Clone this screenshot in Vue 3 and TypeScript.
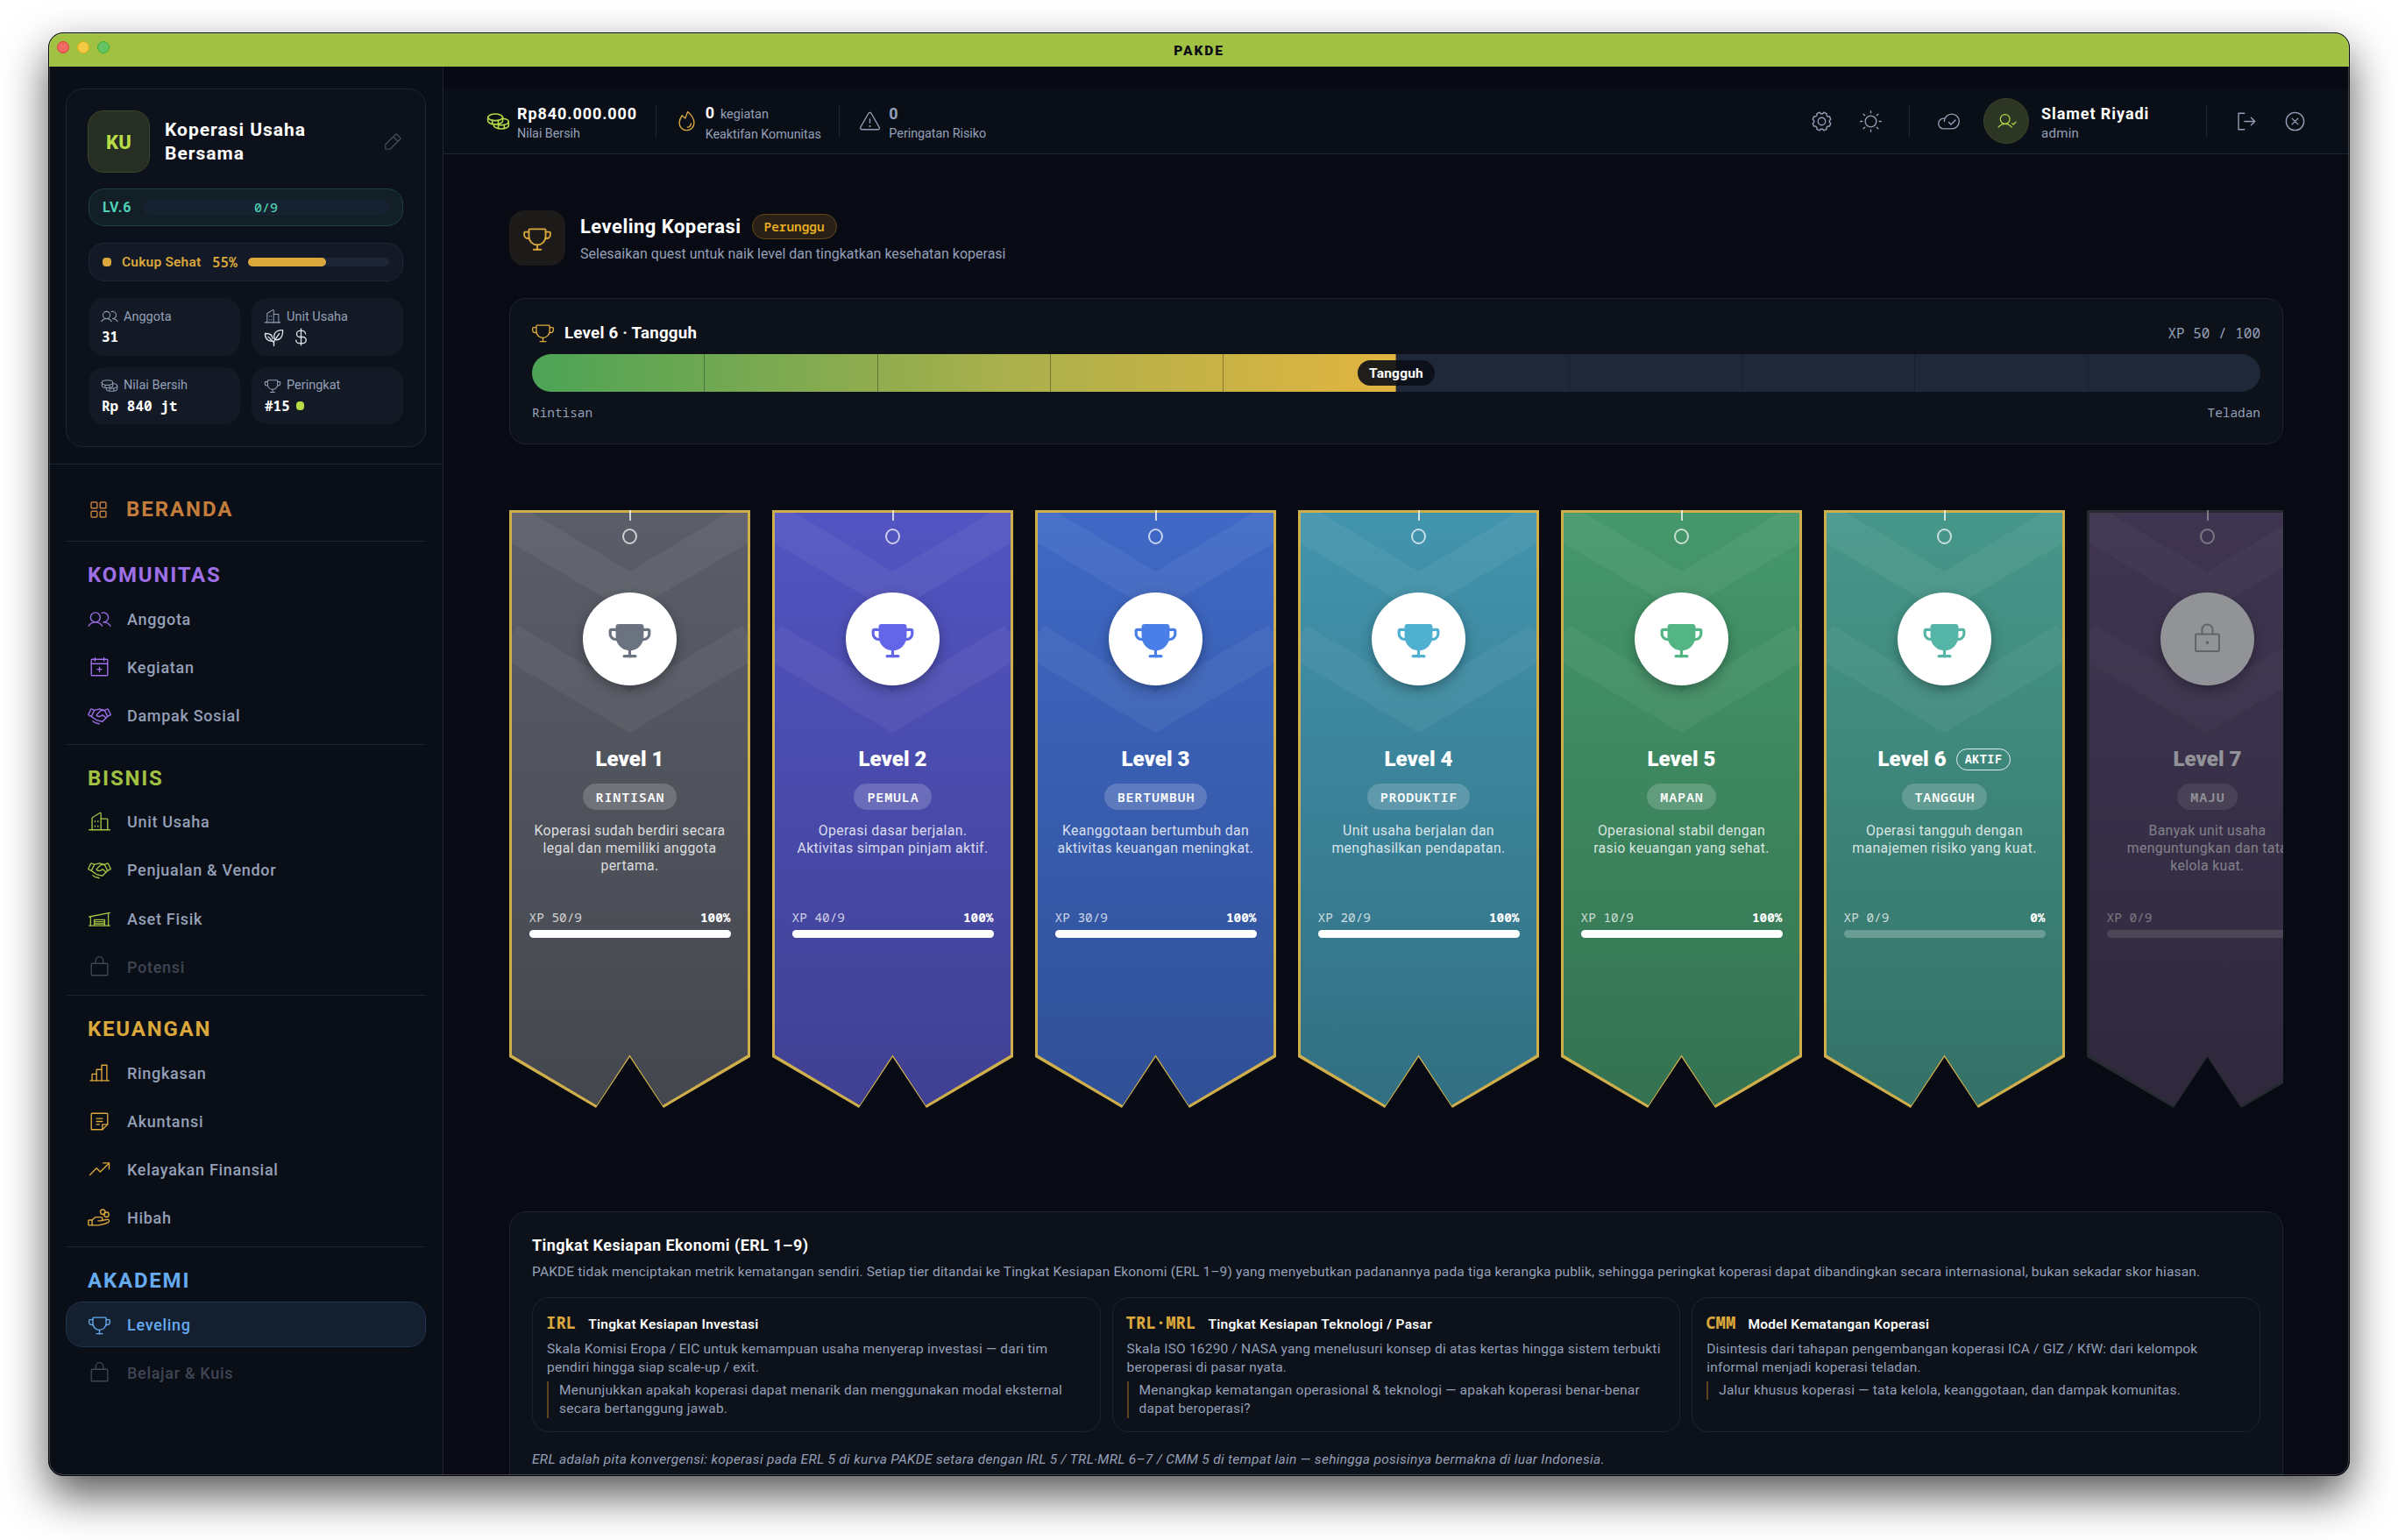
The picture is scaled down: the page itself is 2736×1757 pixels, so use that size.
<script setup lang="ts">
import { h, type FunctionalComponent } from 'vue'

type Shape = string | { d: string; fill: true }

/** Outline of the eight-toothed settings cog on a 256 grid. */
function cogPath(): string {
  const pts: string[] = []
  for (let i = 0; i < 8; i++) {
    const base = (i * Math.PI) / 4 - Math.PI / 8
    for (const [offset, radius] of [[-0.27, 84], [-0.17, 100], [0.17, 100], [0.27, 84]]) {
      const a = base + offset
      pts.push(`${(128 + radius * Math.cos(a)).toFixed(1)} ${(128 + radius * Math.sin(a)).toFixed(1)}`)
    }
  }
  return `M${pts.join('L')}Z`
}

const circle = (cx: number, cy: number, r: number): string =>
  `M${cx - r} ${cy}a${r} ${r} 0 1 0 ${2 * r} 0a${r} ${r} 0 1 0 ${-2 * r} 0Z`

const trophyCup = 'M56 56a8 8 0 0 1 8-8H192a8 8 0 0 1 8 8v55c0 39.7-31.8 72.6-71.5 72.9A72 72 0 0 1 56 112Z'
const trophyRest = [
  'M96 224h64', 'M128 184v40',
  'M198.2 128H208a32 32 0 0 0 32-32V80a8 8 0 0 0-8-8H200',
  'M57.8 128H48a32 32 0 0 1-32-32V80a8 8 0 0 1 8-8h32',
]

const shapes: Record<string, Shape[]> = {
  users: [circle(84, 108, 52), 'M10.2 200a88 88 0 0 1 147.6 0', 'M172 160a87.9 87.9 0 0 1 73.8 40', 'M152.7 59.7A52 52 0 1 1 172 160'],
  calendar: ['M48 40H208a8 8 0 0 1 8 8V208a8 8 0 0 1-8 8H48a8 8 0 0 1-8-8V48a8 8 0 0 1 8-8Z', 'M176 24v32M80 24v32M40 88h176', 'M152 148h-48M128 124v48'],
  handshake: [
    'M200 152l-40 40-64-16-56-40', 'M72.7 70.6L128 56l55.3 14.6',
    'M34.4 60.4L8.9 111.5a8 8 0 0 0 3.5 10.7L40 136 72.7 70.6 45.1 56.9a8 8 0 0 0-10.7 3.5Z',
    'M216 136l27.6-13.8a8 8 0 0 0 3.5-10.7L221.6 60.4a8 8 0 0 0-10.7-3.5L183.3 70.6Z',
    'M184 72H144L98.3 116.3a8 8 0 0 0 1.4 12.4C117.2 139.9 141 139.1 160 120l40 32 16-16',
    'M124 216l-41.7-10.4L56 186.8',
  ],
  buildings: ['M16 216h224', 'M144 216V40a8 8 0 0 0-12.4-6.7L51.6 82.9A8 8 0 0 0 48 89.6V216', 'M216 216V104a8 8 0 0 0-8-8H144', 'M80 120v8M112 120v8M80 172v8M112 172v8'],
  garage: ['M16 200h224', 'M16 104L240 60', 'M32 101v99M224 63v137', 'M72 200V136H184v64', 'M72 158h112M72 180h112'],
  lock: ['M48 88H208a8 8 0 0 1 8 8V208a8 8 0 0 1-8 8H48a8 8 0 0 1-8-8V96a8 8 0 0 1 8-8Z', 'M88 88V56a40 40 0 0 1 80 0V88'],
  lockDot: ['M48 88H208a8 8 0 0 1 8 8V208a8 8 0 0 1-8 8H48a8 8 0 0 1-8-8V96a8 8 0 0 1 8-8Z', 'M88 88V56a40 40 0 0 1 80 0V88', { d: circle(128, 152, 6), fill: true }],
  chart: ['M28 208h204', 'M48 208V136H96', 'M96 208V88h56', 'M152 208V40h56V208'],
  note: ['M156.7 216H48a8 8 0 0 1-8-8V48a8 8 0 0 1 8-8H208a8 8 0 0 1 8 8V156.7a8 8 0 0 1-2.3 5.6l-51.4 51.4A8 8 0 0 1 156.7 216Z', 'M215.3 160H160v55.3', 'M96 96h64M96 128h64M96 160h32'],
  trend: ['M232 56L136 152 96 112 24 184', 'M232 120V56H168'],
  handCoins: [
    'M48 208H16a8 8 0 0 1-8-8V160a8 8 0 0 1 8-8H48',
    'M112 160h32l67-15.4a16.6 16.6 0 0 1 21 16.6c0 6.3-3.6 12-9.2 14.9L184 192l-64 16H48V152l25-25a24 24 0 0 1 17-7h50a20 20 0 0 1 0 40Z',
    circle(164, 64, 26), circle(204, 92, 26),
  ],
  grid: ['M48 56a8 8 0 0 1 8-8h48a8 8 0 0 1 8 8v48a8 8 0 0 1-8 8H56a8 8 0 0 1-8-8Z', 'M144 56a8 8 0 0 1 8-8h48a8 8 0 0 1 8 8v48a8 8 0 0 1-8 8h-48a8 8 0 0 1-8-8Z', 'M48 152a8 8 0 0 1 8-8h48a8 8 0 0 1 8 8v48a8 8 0 0 1-8 8H56a8 8 0 0 1-8-8Z', 'M144 152a8 8 0 0 1 8-8h48a8 8 0 0 1 8 8v48a8 8 0 0 1-8 8h-48a8 8 0 0 1-8-8Z'],
  trophy: [trophyCup, ...trophyRest],
  trophyFill: [{ d: trophyCup, fill: true }, ...trophyRest],
  coins: [
    'M16 84a80 36 0 1 0 160 0a80 36 0 1 0-160 0Z', 'M16 84v40c0 19.9 35.8 36 80 36s80-16.1 80-36V84', 'M64 117v40M128 117v88',
    'M176 96.7c36.5 3.3 64 17.9 64 35.3c0 19.9-35.8 36-80 36a182 182 0 0 1-20-1',
    'M80 159.3V172c0 19.9 35.8 36 80 36s80-16.1 80-36V132', 'M192 165v40',
  ],
  flame: ['M112 96L138.3 24C159.9 41.9 208 88.2 208 144a80 80 0 0 1-160 0c0-30.6 14.4-58.3 31-80Z', 'M136 191.1a48 48 0 0 0 39.1-39.1'],
  warning: ['M142.4 40.2l87.5 151.9C236 202.8 228.1 216 215.5 216H40.5C27.9 216 20 202.8 26.1 192.1L113.6 40.2C119.9 29.3 136.1 29.3 142.4 40.2Z', 'M128 144V104', { d: circle(128, 180, 4), fill: true }],
  gear: [cogPath(), circle(128, 128, 40)],
  sun: [circle(128, 128, 60), 'M128 36V16M128 240v-20M36 128H16M240 128h-20M63 63L49 49M193 63l14-14M63 193l-14 14M193 193l14 14'],
  cloud: ['M80 128a80 80 0 1 1 80 80H72A56 56 0 1 1 85.9 97.7', 'M128 138l24 24 48-48'],
  userCheck: [circle(108, 100, 60), 'M24 200c20.6-24.5 49.6-40 84-40s63.5 15.6 84 40', 'M196 152l16 16 32-32'],
  signOut: ['M112 40H48V216h64', 'M112 128H224', 'M184 88l40 40-40 40'],
  close: [circle(128, 128, 96), 'M160 96L96 160M160 160L96 96'],
  plant: ['M139 160C112 96 150 36 240 40c5 92-44 138-101 120Z', 'M107 176C60 188 14 150 16 84c62-3 94 24 96 64', 'M128 240V196c0-12 4-22 12-30L196 84', 'M56 124l72 74'],
  dollar: ['M128 24v208', 'M184 88a40 40 0 0 0-40-40H112a40 40 0 0 0 0 80h40a40 40 0 0 1 0 80H104a40 40 0 0 1-40-40'],
  pencil: ['M92.7 216H48a8 8 0 0 1-8-8V163.3a8 8 0 0 1 2.3-5.6L165.7 34.3a8 8 0 0 1 11.3 0L221.7 79a8 8 0 0 1 0 11.3L98.3 213.7A8 8 0 0 1 92.7 216Z', 'M136 64l56 56'],
}

const Icon: FunctionalComponent<{ name: string; size?: number; weight?: number }> = (props) =>
  h('svg', {
    viewBox: '0 0 256 256', width: props.size ?? 27, height: props.size ?? 27, fill: 'none', stroke: 'currentColor',
    'stroke-width': props.weight ?? 13, 'stroke-linecap': 'round', 'stroke-linejoin': 'round', 'aria-hidden': 'true',
  }, shapes[props.name].map((s) => typeof s === 'string' ? h('path', { d: s }) : h('path', { d: s.d, fill: 'currentColor' })))
Icon.props = ['name', 'size', 'weight']

interface NavItem { label: string; icon: string; state?: 'active' | 'locked' }
interface NavSection { title: string; tone: string; items: NavItem[] }
const sections: NavSection[] = [
  { title: 'KOMUNITAS', tone: 'violet', items: [
    { label: 'Anggota', icon: 'users' }, { label: 'Kegiatan', icon: 'calendar' }, { label: 'Dampak Sosial', icon: 'handshake' },
  ] },
  { title: 'BISNIS', tone: 'lime', items: [
    { label: 'Unit Usaha', icon: 'buildings' }, { label: 'Penjualan & Vendor', icon: 'handshake' },
    { label: 'Aset Fisik', icon: 'garage' }, { label: 'Potensi', icon: 'lock', state: 'locked' },
  ] },
  { title: 'KEUANGAN', tone: 'gold', items: [
    { label: 'Ringkasan', icon: 'chart' }, { label: 'Akuntansi', icon: 'note' },
    { label: 'Kelayakan Finansial', icon: 'trend' }, { label: 'Hibah', icon: 'handCoins' },
  ] },
  { title: 'AKADEMI', tone: 'sky', items: [
    { label: 'Leveling', icon: 'trophy', state: 'active' }, { label: 'Belajar & Kuis', icon: 'lock', state: 'locked' },
  ] },
]

interface Level { n: number; tag: string; text: string; xp: string; pct: number; accent: string; top: string; bottom: string; active?: boolean; locked?: boolean }
const levels: Level[] = [
  { n: 1, tag: 'RINTISAN', text: 'Koperasi sudah berdiri secara legal dan memiliki anggota pertama.', xp: '50/9', pct: 100, accent: '#6b7280', top: '#5a5e68', bottom: '#44474e' },
  { n: 2, tag: 'PEMULA', text: 'Operasi dasar berjalan. Aktivitas simpan pinjam aktif.', xp: '40/9', pct: 100, accent: '#6366e8', top: '#5254c2', bottom: '#3f4092' },
  { n: 3, tag: 'BERTUMBUH', text: 'Keanggotaan bertumbuh dan aktivitas keuangan meningkat.', xp: '30/9', pct: 100, accent: '#4a7fe8', top: '#3f69c6', bottom: '#305096' },
  { n: 4, tag: 'PRODUKTIF', text: 'Unit usaha berjalan dan menghasilkan pendapatan.', xp: '20/9', pct: 100, accent: '#4fb0d0', top: '#4294ad', bottom: '#326f82' },
  { n: 5, tag: 'MAPAN', text: 'Operasional stabil dengan rasio keuangan yang sehat.', xp: '10/9', pct: 100, accent: '#52b583', top: '#45986b', bottom: '#347251' },
  { n: 6, tag: 'TANGGUH', text: 'Operasi tangguh dengan manajemen risiko yang kuat.', xp: '0/9', pct: 0, accent: '#55b5a6', top: '#46978a', bottom: '#347167', active: true },
  { n: 7, tag: 'MAJU', text: 'Banyak unit usaha menguntungkan dan tata kelola kuat.', xp: '0/9', pct: 0, accent: '#a6a9ae', top: '#6b5882', bottom: '#50425f', locked: true },
]

const frameworks = [
  { code: 'IRL', name: 'Tingkat Kesiapan Investasi', body: 'Skala Komisi Eropa / EIC untuk kemampuan usaha menyerap investasi — dari tim pendiri hingga siap scale-up / exit.', quote: 'Menunjukkan apakah koperasi dapat menarik dan menggunakan modal eksternal secara bertanggung jawab.' },
  { code: 'TRL·MRL', name: 'Tingkat Kesiapan Teknologi / Pasar', body: 'Skala ISO 16290 / NASA yang menelusuri konsep di atas kertas hingga sistem terbukti beroperasi di pasar nyata.', quote: 'Menangkap kematangan operasional & teknologi — apakah koperasi benar-benar dapat beroperasi?' },
  { code: 'CMM', name: 'Model Kematangan Koperasi', body: 'Disintesis dari tahapan pengembangan koperasi ICA / GIZ / KfW: dari kelompok informal menjadi koperasi teladan.', quote: 'Jalur khusus koperasi — tata kelola, keanggotaan, dan dampak komunitas.' },
]
</script>

<template>
  <div class="desktop">
    <div class="window">
      <header class="titlebar">
        <div class="lights"><i class="red" /><i class="yellow" /><i class="green" /></div>
        <span class="app-name">PAKDE</span>
      </header>
      <div class="shell">
        <aside class="sidebar">
          <section class="profile">
            <div class="profile-head">
              <div class="logo">KU</div>
              <h1>Koperasi Usaha<br>Bersama</h1>
              <Icon class="edit" name="pencil" :size="24" />
            </div>
            <div class="lv"><b>LV.6</b><div class="lv-track mono">0/9</div></div>
            <div class="health">
              <i class="dot" /><span>Cukup Sehat</span><b class="mono">55%</b>
              <div class="health-track"><div :style="{ width: '55.3%' }" /></div>
            </div>
            <div class="tiles">
              <div class="tile"><p><Icon name="users" :size="20" />Anggota</p><b class="mono">31</b></div>
              <div class="tile"><p><Icon name="buildings" :size="20" />Unit Usaha</p><b class="units"><Icon name="plant" :size="23" :weight="15" /><Icon name="dollar" :size="23" :weight="15" /></b></div>
              <div class="tile"><p><Icon name="coins" :size="20" />Nilai Bersih</p><b class="mono">Rp 840 jt</b></div>
              <div class="tile"><p><Icon name="trophy" :size="20" />Peringkat</p><b class="mono">#15<i class="rank" /></b></div>
            </div>
          </section>
          <nav>
            <a class="home"><Icon name="grid" :size="27" :weight="14" />BERANDA</a>
            <section v-for="s in sections" :key="s.title" class="group" :class="s.tone">
              <h2>{{ s.title }}</h2>
              <a v-for="i in s.items" :key="i.label" :class="i.state"><Icon :name="i.icon" />{{ i.label }}</a>
            </section>
          </nav>
        </aside>

        <main>
          <div class="topbar">
            <div class="stat"><Icon class="lime-ink" name="coins" :weight="15" /><div><b>Rp840.000.000</b><small>Nilai Bersih</small></div></div>
            <div class="stat"><Icon class="gold-ink" name="flame" /><div><b>0<em>kegiatan</em></b><small>Keaktifan Komunitas</small></div></div>
            <div class="stat"><Icon name="warning" /><div><b class="dim">0</b><small>Peringatan Risiko</small></div></div>
            <div class="tools">
              <button><Icon name="gear" /></button>
              <button><Icon name="sun" /></button>
              <span class="rule" />
              <button><Icon name="cloud" /></button>
              <div class="user">
                <span class="avatar"><Icon name="userCheck" :size="23" :weight="14" /></span>
                <div><b>Slamet Riyadi</b><small>admin</small></div>
              </div>
              <span class="rule" />
              <button><Icon name="signOut" /></button>
              <button><Icon name="close" /></button>
            </div>
          </div>

          <div class="page">
            <div class="heading">
              <span class="heading-icon"><Icon name="trophy" :size="34" :weight="14" /></span>
              <div>
                <h3>Leveling Koperasi <span class="badge mono">Perunggu</span></h3>
                <p>Selesaikan quest untuk naik level dan tingkatkan kesehatan koperasi</p>
              </div>
            </div>

            <section class="progress">
              <div class="progress-head"><Icon class="gold-ink" name="trophy" :size="27" /><b>Level 6 · Tangguh</b><span class="mono">XP 50 / 100</span></div>
              <div class="meter">
                <div class="meter-clip">
                  <div class="meter-fill" :style="{ width: '50%' }" />
                  <div class="ticks"><i v-for="n in 10" :key="n" /></div>
                </div>
                <span class="bubble">Tangguh</span>
              </div>
              <div class="ends mono"><span>Rintisan</span><span>Teladan</span></div>
            </section>

            <div class="ribbons">
              <article v-for="l in levels" :key="l.n" class="ribbon" :class="{ locked: l.locked }">
                <div class="cloth" :style="{ background: `linear-gradient(${l.top}, ${l.bottom})` }" />
                <svg class="chevrons" viewBox="0 0 275 682" aria-hidden="true">
                  <path d="M0 -12.5L137.5 70L275 -12.5V36L137.5 117L0 36Z" fill="#fff" fill-opacity=".055" />
                  <path d="M9.5 131.5L137.5 207L265.5 131.5L275 146V173L137.5 254L0 173V146Z" fill="#fff" fill-opacity=".05" />
                </svg>
                <i class="string" /><i class="ring" />
                <div class="ribbon-body">
                  <div class="medal" :style="{ color: l.accent }">
                    <Icon v-if="l.locked" name="lockDot" :size="39" :weight="13" />
                    <Icon v-else name="trophyFill" :size="51" :weight="16" />
                  </div>
                  <h4>Level {{ l.n }}<span v-if="l.active" class="live mono">AKTIF</span></h4>
                  <span class="tag mono">{{ l.tag }}</span>
                  <p>{{ l.text }}</p>
                  <div class="xp mono"><span>XP {{ l.xp }}</span><b>{{ l.pct }}%</b></div>
                  <div class="xp-track"><div :style="{ width: l.pct + '%' }" /></div>
                </div>
              </article>
            </div>

            <section class="erl">
              <h5>Tingkat Kesiapan Ekonomi (ERL 1–9)</h5>
              <p class="intro">PAKDE tidak menciptakan metrik kematangan sendiri. Setiap tier ditandai ke Tingkat Kesiapan Ekonomi (ERL 1–9) yang menyebutkan padanannya pada tiga kerangka publik, sehingga peringkat koperasi dapat dibandingkan secara internasional, bukan sekadar skor hiasan.</p>
              <div class="frameworks">
                <article v-for="f in frameworks" :key="f.code">
                  <header><b class="mono">{{ f.code }}</b><span>{{ f.name }}</span></header>
                  <p>{{ f.body }}</p>
                  <blockquote>{{ f.quote }}</blockquote>
                </article>
              </div>
              <p class="foot">ERL adalah pita konvergensi: koperasi pada ERL 5 di kurva PAKDE setara dengan IRL 5 / TRL·MRL 6–7 / CMM 5 di tempat lain — sehingga posisinya bermakna di luar Indonesia.</p>
            </section>
          </div>
        </main>
      </div>
    </div>
  </div>
</template>

<style>
body { background: #fff; }
</style>

<style scoped>
* { box-sizing: border-box; margin: 0; padding: 0; }
svg { display: block; flex: none; }
i, em { font-style: normal; }
button { background: none; border: 0; color: inherit; }
.desktop { height: 1757px; padding: 37px 55px 0; overflow: hidden; font-family: Roboto, "Open Sans", sans-serif; color: #94a0b8; }
.mono { font-family: "Noto Sans Mono", "DejaVu Sans Mono", monospace; letter-spacing: 0; }
.window { position: relative; width: 2626px; height: 1647px; display: flex; flex-direction: column; border: 1px solid #05070c; border-radius: 17px; overflow: hidden; background: #080a14; box-shadow: 0 22px 50px rgba(0, 0, 0, .66); }
.window::after { content: ""; position: absolute; inset: 0; border: 1px solid rgba(255, 255, 255, .22); border-radius: 16px; pointer-events: none; }

.titlebar { flex: none; height: 38px; padding-top: 1px; background: #a1c142; display: flex; align-items: center; justify-content: center; position: relative; }
.lights { position: absolute; left: 9px; top: 9px; display: flex; gap: 9px; }
.lights i { width: 14px; height: 14px; border-radius: 50%; border: 1px solid; }
.lights .red { background: #ee6a63; border-color: #dd4039; }
.lights .yellow { background: #f3ca45; border-color: #dfae16; }
.lights .green { background: #66c466; border-color: #3aae35; }
.app-name { font-size: 15.5px; font-weight: 900; letter-spacing: 1.9px; color: #0a0d14; }

.shell { flex: 1; min-height: 0; display: flex; }
.sidebar { flex: none; width: 450px; padding-top: 25px; background: #0a0e17; border-right: 1px solid #1e2534; }
.profile { height: 409px; margin: 0 19px 19px; padding: 24px 25px; border: 1px solid #1e2636; border-radius: 19px; background: #0d111b; }
.profile-head { height: 71px; display: flex; align-items: center; }
.logo { width: 71px; height: 71px; margin-left: -1px; padding-top: 1px; display: flex; align-items: center; justify-content: center; border: 1px solid #3b4626; border-radius: 18px; background: #272e24; color: #b9dd48; font-size: 22px; font-weight: 800; letter-spacing: .3px; }
h1 { margin-left: 17px; padding-top: 1px; flex: 1; color: #fff; font-size: 21px; font-weight: 700; line-height: 27px; letter-spacing: 1px; }
.edit { color: #474d5b; }
.lv { height: 43px; margin-top: 18px; padding: 0 15px; display: flex; align-items: center; gap: 12px; border: 1px solid #1d413f; border-radius: 18px; background: #131f27; color: #4fd0b6; }
.lv b { width: 34px; font-size: 16px; letter-spacing: .9px; }
.lv-track { flex: 1; height: 19px; border-radius: 10px; background: #172230; font-size: 15px; font-weight: 500; line-height: 19px; text-align: center; }
.health { height: 44px; margin-top: 19px; padding: 0 15px; display: flex; align-items: center; border: 1px solid #1e2738; border-radius: 18px; background: #131926; color: #dba83c; }
.health .dot { flex: none; width: 10px; height: 10px; border-radius: 4px; background: currentColor; }
.health span { flex: none; width: 115px; padding-left: 12px; font-size: 15.5px; font-weight: 600; letter-spacing: .2px; white-space: nowrap; }
.health b { flex: none; width: 41px; font-size: 16px; font-weight: 600; }
.health-track { flex: 1; height: 10px; border-radius: 5px; background: #1d2636; }
.health-track div { height: 100%; border-radius: 5px; background: currentColor; }
.tiles { margin-top: 19px; display: grid; grid-template-columns: 1fr 1fr; gap: 13px; }
.tile { height: 65.5px; padding: 11px 14px; border-radius: 18px; background: #131a26; }
.tile p { height: 20px; display: flex; align-items: center; gap: 6px; font-size: 14.5px; }
.tile b { height: 24px; margin: 1px 1px 0; display: flex; align-items: center; color: #fff; font-size: 16px; }
.tile .units { margin-left: 0; gap: 8px; color: #dfe4ec; }
.rank { width: 9px; height: 10px; margin-left: 7px; border-radius: 4px; background: #b5dc45; }

nav { border-top: 1px solid #1b2332; }
nav > * { margin: 0 19px; }
nav a { display: flex; align-items: center; gap: 18px; }
.home { height: 87px; padding: 15px 0 0 24px; color: #c27d3c; font-size: 24px; font-weight: 700; letter-spacing: 1.95px; }
.group { padding: 14px 0 6px; border-top: 1px solid #1b2231; }
.group h2 { height: 48px; padding-left: 25px; line-height: 49px; font-size: 24px; font-weight: 700; letter-spacing: 1.8px; color: var(--tone); }
.group a { height: 52.2px; padding-left: 24px; border: 1px solid transparent; border-radius: 19px; font-size: 18px; font-weight: 500; letter-spacing: .7px; }
.group a + a { margin-top: 3px; }
.group a svg { color: var(--tone); }
.violet { --tone: #9f6fe8; }
.lime { --tone: #a1c142; }
.gold { --tone: #dba83c; }
.sky { --tone: #66aaf0; }
.group .locked, .group .locked svg { color: #3f4553; }
.group .active { color: #66aaf0; background: #142030; border-color: #20344d; }

main { flex: 1; min-width: 0; display: flex; flex-direction: column; }
.topbar { flex: none; height: 100px; padding: 25px 34px 0 28px; display: flex; align-items: center; border-bottom: 1px solid #1d2434; background: linear-gradient(#080a13 25px, #0a0e17 25px); }
.stat { height: 38px; padding: 0 20.5px 0 21px; display: flex; align-items: center; gap: 8px; }
.stat + .stat { border-left: 1px solid #1e2534; }
.stat > div, .user > div { padding-top: 4px; }
.topbar b, .topbar small { display: block; white-space: nowrap; }
.topbar b { color: #fff; font-size: 18px; line-height: 24px; letter-spacing: .93px; }
.topbar .dim { color: #94a0b8; }
.topbar small { font-size: 14.4px; line-height: 21px; letter-spacing: -.05px; }
.topbar em { margin-left: 6px; color: #94a0b8; font-size: 14.5px; font-weight: 400; letter-spacing: 0; }
.lime-ink { color: #b5dc45; }
.gold-ink { color: #dba83c; }
.tools { margin-left: auto; display: flex; align-items: center; }
.tools button { width: 56px; height: 56px; display: flex; align-items: center; justify-content: center; }
.rule { width: 1px; height: 38px; margin: 0 16px; background: #1e2534; }
.user { width: 238px; margin-left: 12px; display: flex; align-items: center; gap: 14px; }
.user small { font-size: 15px; letter-spacing: .3px; }
.avatar { width: 52px; height: 52px; display: flex; align-items: center; justify-content: center; border: 1px solid #3b4627; border-radius: 50%; background: #2d3524; color: #b5dc45; }

.page { flex: 1; min-height: 0; padding: 64px 75px 0; }
.heading { height: 63px; display: flex; align-items: center; gap: 17px; }
.heading-icon { width: 64px; height: 63px; display: flex; align-items: center; justify-content: center; border-radius: 17px; background: #1d1b19; color: #dba83c; }
h3 { height: 30px; margin-top: 2px; display: flex; align-items: center; gap: 12px; color: #fff; font-size: 22px; letter-spacing: .47px; }
.badge { height: 29px; padding: 0 13px; border: 1px solid #66491a; border-radius: 15px; background: #292017; color: #eab020; font-size: 14.4px; font-weight: 600; line-height: 27px; }
.heading p { margin-top: 5px; font-size: 16px; line-height: 24px; }

.progress { height: 167px; margin-top: 37px; padding: 24px 25px; border: 1px solid #1c2433; border-radius: 19px; background: #0d111a; }
.progress-head { height: 29px; display: flex; align-items: center; }
.progress-head svg { margin-left: -1px; }
.progress-head b { margin-left: 11px; color: #fff; font-size: 18.7px; letter-spacing: .23px; }
.progress-head span { margin-left: auto; font-size: 16px; }
.meter { position: relative; height: 43px; margin-top: 10px; }
.meter-clip { display: grid; height: 43px; border-radius: 22px; overflow: hidden; background: #1f2838; }
.meter-clip > * { grid-area: 1 / 1; }
.meter-fill { background: linear-gradient(90deg, #4ca356, #aab04c 55%, #e2b440); }
.ticks { display: flex; }
.ticks i { flex: 1; border-right: 1px solid rgba(10, 14, 23, .35); }
.ticks i:last-child { border: 0; }
.bubble { position: absolute; left: 50%; top: 7px; width: 88px; height: 29px; transform: translateX(-50%); border-radius: 15px; background: rgba(10, 13, 23, .9); color: #fff; font-size: 15.5px; font-weight: 700; letter-spacing: .2px; line-height: 30px; text-align: center; }
.ends { margin-top: 14px; display: flex; justify-content: space-between; font-size: 14.4px; line-height: 20px; }

.ribbons { margin-top: 75px; display: flex; gap: 25px; overflow: hidden; }
.ribbon { position: relative; flex: none; width: 275px; height: 682px; background: #cfae4c; clip-path: polygon(0 0, 100% 0, 100% 91.5%, 64% 100%, 50% 91.5%, 36% 100%, 0 91.5%); }
.cloth { position: absolute; inset: 3px; clip-path: polygon(0 0, 100% 0, 100% 91.5%, 64% 100%, 50% 91.5%, 36% 100%, 0 91.5%); }
.chevrons { position: absolute; left: 0; top: 0; width: 275px; height: 682px; clip-path: inset(3px); }
.string { position: absolute; left: 137px; top: 0; width: 2px; height: 12px; background: rgba(255, 255, 255, .75); }
.ring { position: absolute; left: 129px; top: 21px; width: 17px; height: 18px; border: 2px solid rgba(255, 255, 255, .7); border-radius: 50%; }
.ribbon-body { position: relative; padding: 94px 23px 0; display: flex; flex-direction: column; align-items: center; color: #fff; }
.medal { width: 107px; height: 106px; display: flex; align-items: center; justify-content: center; border-radius: 50%; background: #fff; box-shadow: 0 5px 14px rgba(0, 0, 0, .3); }
h4 { height: 28px; margin-top: 70px; display: flex; align-items: center; gap: 11px; font-size: 24px; font-weight: 900; letter-spacing: .05px; line-height: 28px; }
.live { height: 25px; padding: 0 9px; border: 1px solid rgba(255, 255, 255, .85); border-radius: 13px; font-size: 13.6px; font-weight: 700; letter-spacing: .4px; line-height: 22px; }
.tag { height: 30px; margin-top: 14px; padding: 0 14px 0 15px; border-radius: 15px; background: rgba(255, 255, 255, .19); font-size: 15px; font-weight: 600; letter-spacing: .85px; line-height: 30px; }
.ribbon p { height: 60px; margin: 14px -8px 0; padding: 0 8px; color: rgba(255, 255, 255, .82); font-size: 15.8px; letter-spacing: .35px; line-height: 20.2px; text-align: center; }
.xp { width: 230px; height: 20px; margin-top: 38px; display: flex; justify-content: space-between; align-items: center; color: rgba(255, 255, 255, .75); font-size: 14.4px; }
.xp b { color: #fff; }
.xp-track { width: 230px; height: 9px; margin-top: 5px; border-radius: 5px; background: rgba(255, 255, 255, .25); }
.xp-track div { height: 100%; border-radius: 5px; background: #fff; }
.ribbon.locked { background: #404448; opacity: .56; }

.erl { height: 400px; margin-top: 118px; padding: 26px 25px; border: 1px solid #1c2433; border-radius: 19px; background: #0d111a; font-size: 15.5px; letter-spacing: .19px; }
h5 { color: #fff; font-size: 18px; letter-spacing: .44px; line-height: 24px; }
.intro { margin-top: 7px; line-height: 22px; letter-spacing: .158px; white-space: nowrap; }
.frameworks { margin-top: 18px; display: grid; grid-template-columns: repeat(3, 1fr); gap: 12.8px; }
.frameworks article { height: 154px; padding: 16px 15px 0 16px; border: 1px solid #1c2433; border-radius: 19px; }
.frameworks header { height: 24px; display: flex; align-items: center; }
.frameworks b { margin-left: -1px; color: #dba83c; font-size: 19px; }
.frameworks header span { margin-left: 14px; padding-top: 3px; color: #fff; font-weight: 600; letter-spacing: .28px; }
.frameworks p { margin-top: 8px; line-height: 21.3px; }
blockquote { margin-top: 4px; padding-left: 12px; border-left: 2px solid #5a4420; line-height: 21.3px; letter-spacing: .22px; }
.foot { margin-top: 20px; font-style: italic; line-height: 22px; letter-spacing: .3px; white-space: nowrap; }
</style>
